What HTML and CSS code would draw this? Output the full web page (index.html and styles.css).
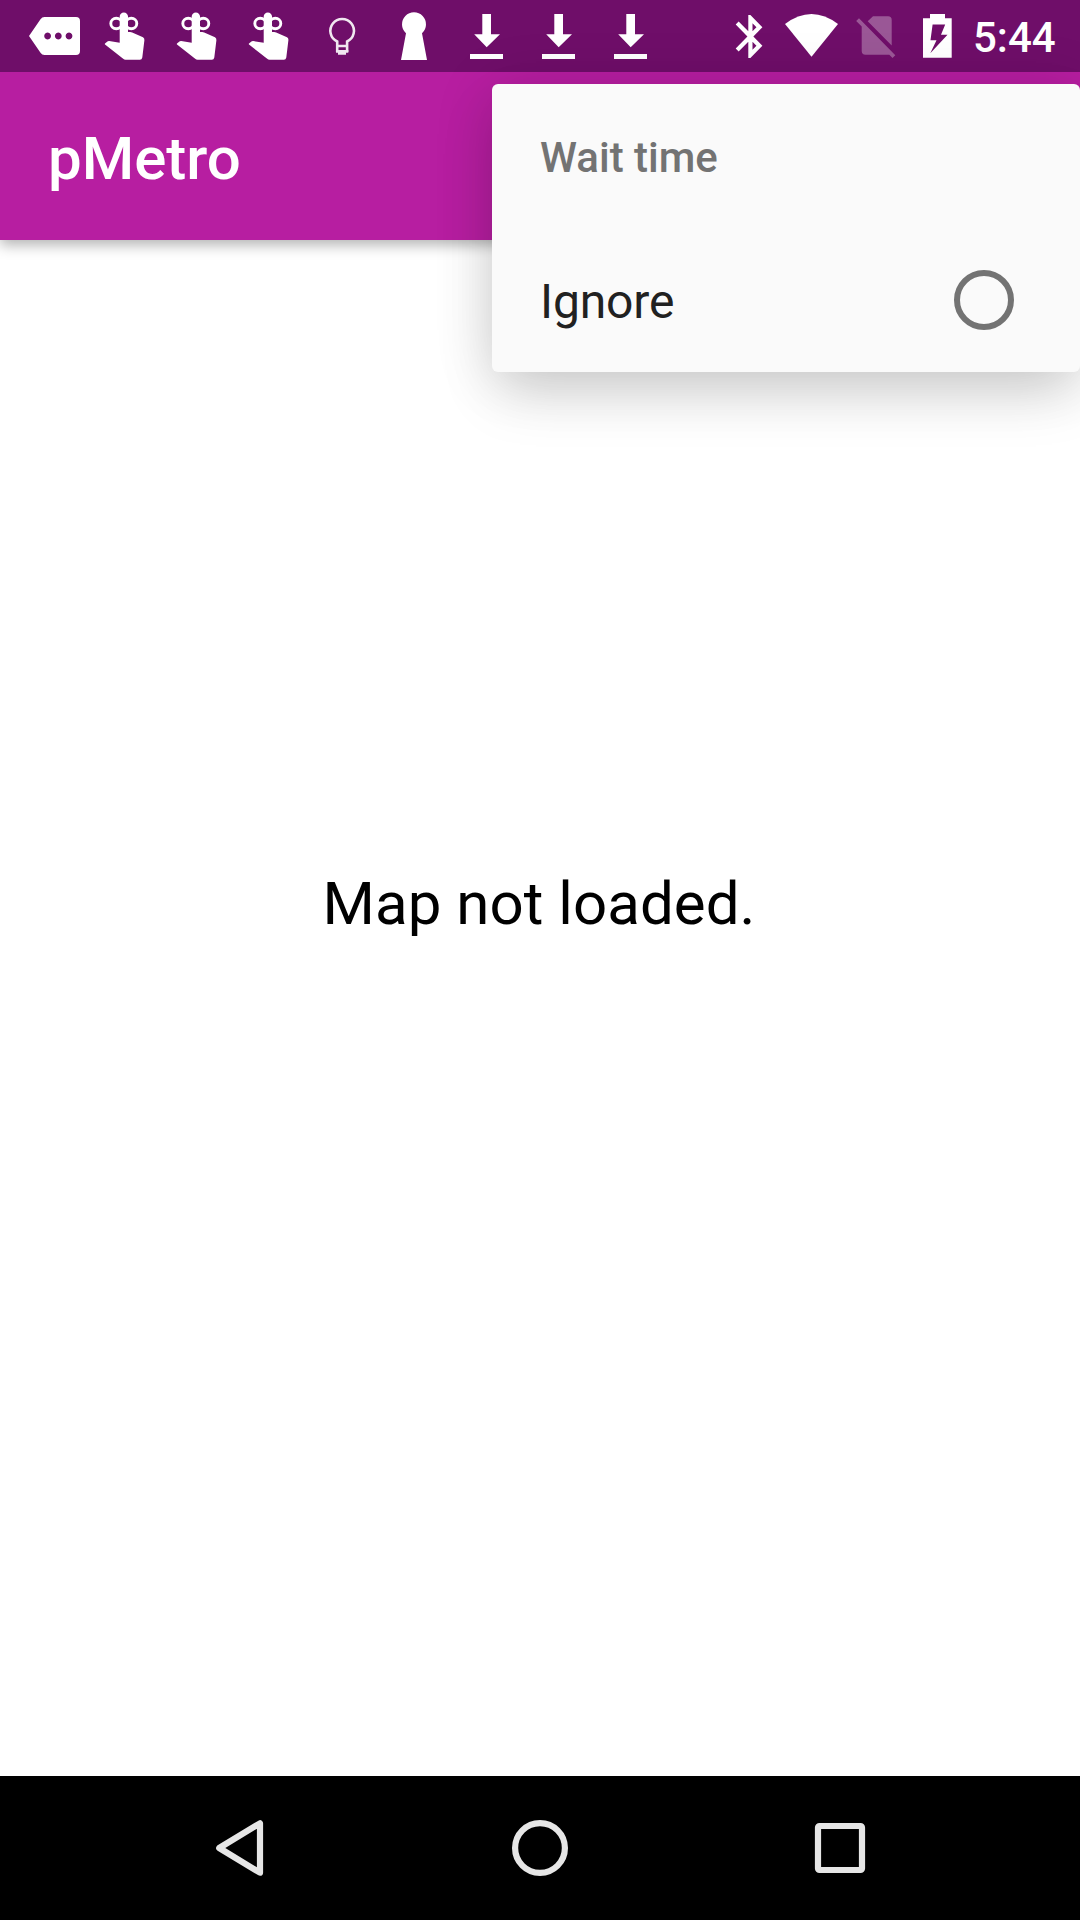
FILE: index.html
```html
<!DOCTYPE html>
<html lang="en">
<head>
<meta charset="utf-8">
<title>pMetro</title>
<link rel="stylesheet" href="styles.css">
</head>
<body>
<svg class="defs" width="0" height="0" aria-hidden="true">
  <symbol id="hand" viewBox="0 0 72 72">
    <path fill="currentColor" d="M29.7 42.8V16.6a4.15 4.15 0 0 1 8.3 0V32h2.2q1 0 2 .5L53 37.2q1.6 1 1.4 3L52.3 57.5q-.4 2.200-2.400 2.200H35.600q-1.400 0-2.400-1L15 44.600q-.5-.6 0-1.200l2.400-2q.8-.5 1.800-.4z"/>
    <g fill="none" stroke="currentColor" stroke-width="2.900"><ellipse cx="26.300" cy="23.500" rx="5.500" ry="5.200"/><ellipse cx="41.300" cy="23.500" rx="5.500" ry="5.200"/></g>
  </symbol>
  <symbol id="download" viewBox="0 0 72 72">
    <path fill="currentColor" d="M32.300 14H41v20.300h9L36.700 47.200 24.200 34.300h8.100zM20 54h33v5H20z"/>
  </symbol>
</svg>
<div class="screen">
  <header class="status-bar">
    <div class="notifications">
      <svg class="slot" viewBox="0 0 72 72"><path fill="currentColor" fill-rule="evenodd" d="M26.500 17H58q4 0 4 4v30q0 4-4 4H26.500q-2.500 0-4-2.200L11 36l11.500-16.800q1.500-2.200 4-2.200zM29.600 32.600a3.400 3.400 0 1 0 .01 0zM40.300 32.600a3.400 3.400 0 1 0 .01 0zM51 32.600a3.400 3.400 0 1 0 .01 0z"/></svg>
      <svg class="slot"><use href="#hand"/></svg>
      <svg class="slot"><use href="#hand"/></svg>
      <svg class="slot"><use href="#hand"/></svg>
      <svg class="slot bulb" viewBox="0 0 72 72"><path fill="none" stroke="currentColor" stroke-width="2.600" d="M31.200 52V41.500A11.800 11.800 0 1 1 41.100 41.500V52M31 46h10"/><path fill="currentColor" d="M30 50h12.300v2.700H40v2.100h-8v-2.100h-2z"/></svg>
      <svg class="slot" viewBox="0 0 72 72"><path fill="currentColor" d="M28 33.300a12 12 0 1 1 16 0L49 60H23z"/></svg>
      <svg class="slot"><use href="#download"/></svg>
      <svg class="slot"><use href="#download"/></svg>
      <svg class="slot"><use href="#download"/></svg>
    </div>
    <div class="system">
      <svg class="sys" viewBox="0 0 60 72"><path fill="currentColor" transform="translate(5.200 10.700) scale(2.100 2.150)" d="M17.710 7.710L12 2h-1v7.590L6.410 5 5 6.410 10.590 12 5 17.590 6.410 19 11 14.410V22h1l5.710-5.710-4.300-4.290 4.300-4.290zM13 5.830l1.880 1.880L13 9.590V5.830zm1.880 10.460L13 18.170v-3.760l1.880 1.880z"/></svg>
      <svg class="sys wifi" viewBox="0 0 66 72"><path fill="currentColor" d="M5 24Q31.500 4 58 24L31.500 56.700z"/></svg>
      <svg class="sys sim" viewBox="0 0 60 72"><path fill="currentColor" d="M21.700 21.200L27 16.300H42q3.700 0 3.700 3.700V45.500zM13 18.200L49.300 55.200 46.500 57.900 43.300 54.700H19.500q-3.800 0-3.800-3.700V26.600L10.200 21z"/></svg>
      <svg class="sys" viewBox="0 0 60 72"><path fill="currentColor" fill-rule="evenodd" d="M24 14H39v4.300h6.700v39.400H17V18.300h7zM26.600 24.500L24.500 40.300h6L24.300 53.300 41.500 34.700H35L39.200 24.500z"/></svg>
      <span class="clock">5:44</span>
    </div>
  </header>
  <div class="app-bar"><h1 class="title">pMetro</h1></div>
  <main class="content"><p class="message">Map not loaded.</p></main>
  <nav class="nav-bar">
    <svg class="nav-icon" viewBox="0 0 72 72"><path d="M56 11.300V60.700L15.200 36z"/></svg>
    <svg class="nav-icon" viewBox="0 0 72 72"><circle cx="36" cy="36" r="24.900"/></svg>
    <svg class="nav-icon" viewBox="0 0 72 72"><rect x="14" y="14" width="44" height="44" rx="1.500"/></svg>
  </nav>
  <div class="menu">
    <div class="menu-row heading">Wait time</div>
    <div class="menu-row option"><span>Ignore</span><span class="radio"></span></div>
  </div>
</div>
</body>
</html>
```
FILE: styles.css
```css
* { box-sizing: border-box; }
body { margin: 0; background: #fff; font-family: Roboto, sans-serif; }
.defs { position: absolute; }
.screen {
  position: relative;
  display: flex;
  flex-direction: column;
  width: 1080px;
  height: 1920px;
  overflow: hidden;
}
.status-bar {
  display: flex;
  justify-content: space-between;
  height: 72px;
  padding-left: 18px;
  background: #6f0e69;
  color: #fff;
}
.notifications, .system { display: flex; }
.system { width: 360px; }
.slot { width: 72px; height: 72px; }
.bulb { opacity: .9; }
.sys { width: 60px; height: 72px; }
.wifi { width: 66px; }
.sim { opacity: .3; }
.clock {
  padding: 3px 0 0 7px;
  font-size: 42px;
  font-weight: 500;
  line-height: 69px;
}
.app-bar {
  z-index: 1;
  display: flex;
  align-items: center;
  height: 168px;
  padding: 4px 48px 0;
  background: #b71ea1;
  box-shadow: 0 5px 13px rgba(0, 0, 0, .3);
  clip-path: inset(0 0 -40px 0);
}
.title { margin: 0; color: #fff; font-size: 60px; font-weight: 500; }
.content {
  flex: 1;
  display: flex;
  align-items: center;
  justify-content: center;
  padding: 0 2px 209px 0;
}
.message { margin: 0; color: #000; font-size: 60px; letter-spacing: .05px; }
.nav-bar {
  display: flex;
  align-items: center;
  justify-content: center;
  gap: 228px;
  height: 144px;
  background: #000;
}
.nav-icon {
  width: 72px;
  height: 72px;
  fill: none;
  stroke: #e6e6e6;
  stroke-width: 6.2;
  stroke-linejoin: round;
}
.menu {
  position: absolute;
  z-index: 2;
  top: 84px;
  right: 0;
  width: 588px;
  background: #fafafa;
  border-radius: 6px;
  box-shadow: 0 26px 54px -6px rgba(0, 0, 0, .15), 0 4px 62px rgba(0, 0, 0, .12);
}
.menu-row {
  display: flex;
  align-items: center;
  justify-content: space-between;
  height: 144px;
  padding: 0 66px 0 48px;
}
.heading { padding-top: 3px; color: #737373; font-size: 42px; font-weight: 500; }
.option { color: #212121; font-size: 48px; }
.option > span:first-child { padding-top: 3px; letter-spacing: -.15px; }
.radio { width: 60px; height: 60px; border: 6px solid #737373; border-radius: 50%; }
```
